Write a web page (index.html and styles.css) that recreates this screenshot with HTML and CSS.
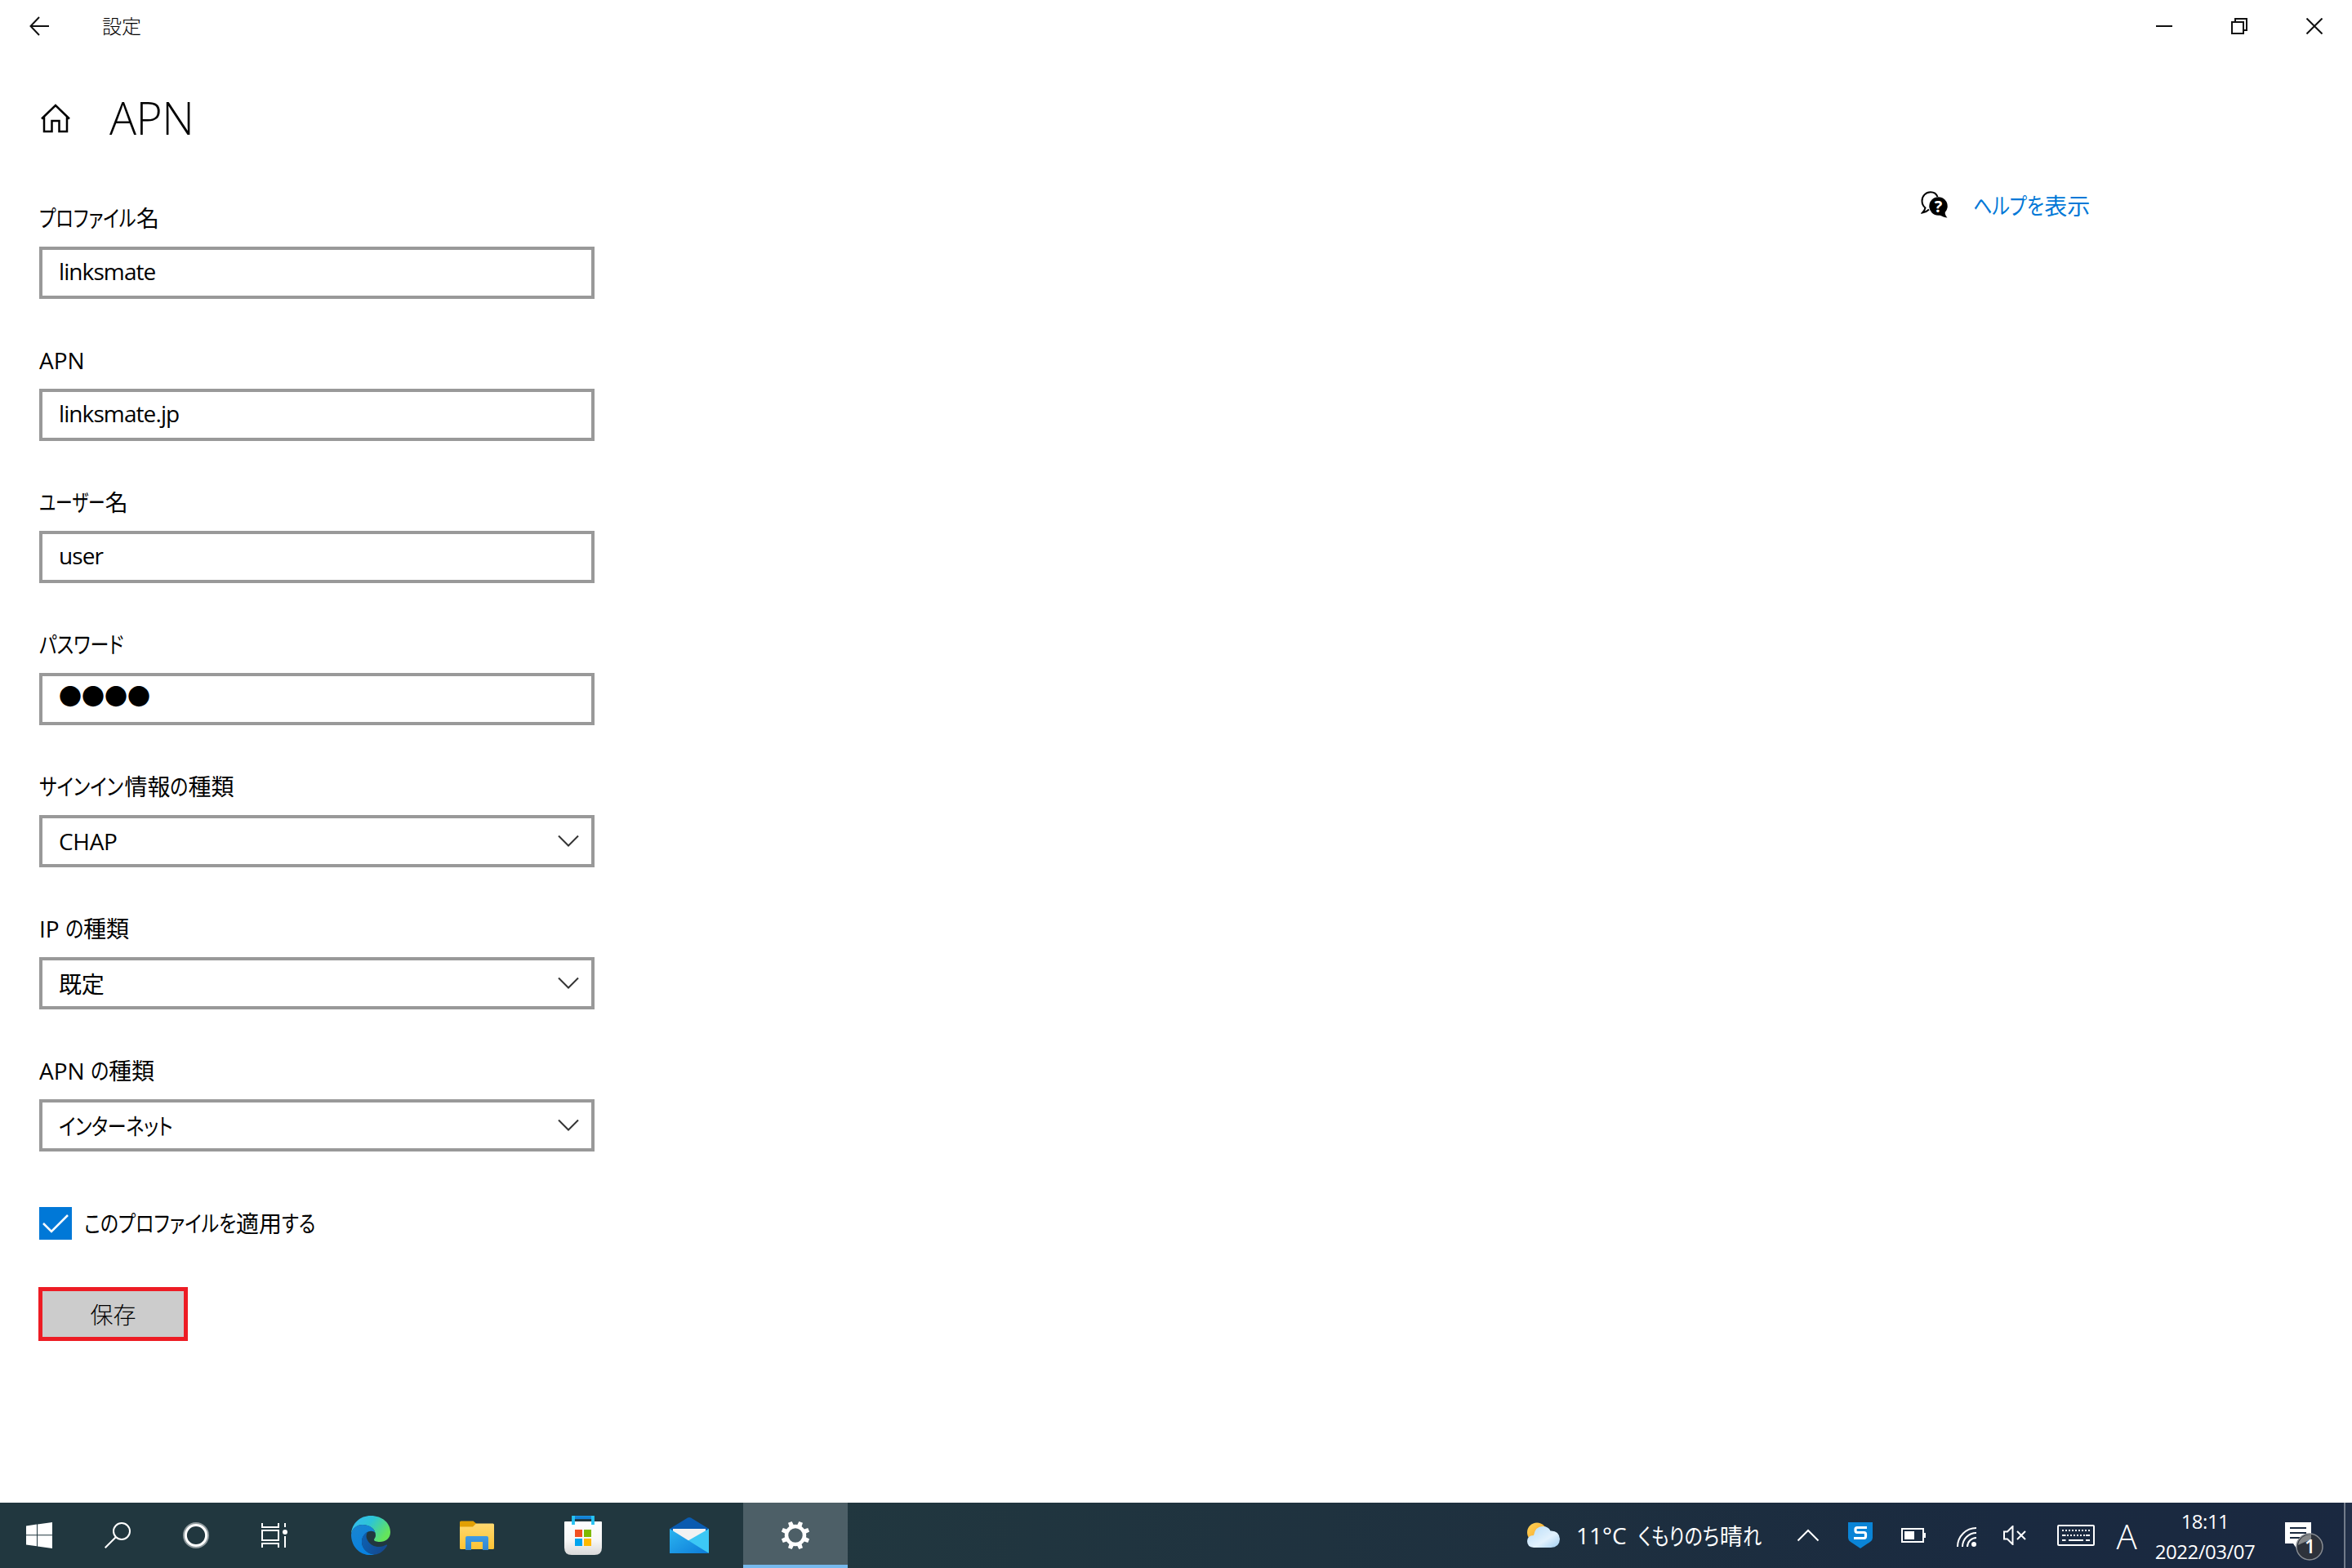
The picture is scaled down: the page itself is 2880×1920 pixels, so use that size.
FILE: index.html
```html
<!DOCTYPE html>
<html lang="ja">
<head>
  <meta charset="UTF-8">
  <meta name="viewport" content="width=device-width, initial-scale=1.0">
  <title>設定</title>
  <link rel="stylesheet" href="styles.css">
</head>
<body>

<!-- Title bar -->
<header class="titlebar">
  <svg class="back" width="24" height="24" viewBox="0 0 24 24"><path d="M24 12H1.5M12 1L1.5 12L12 23"/></svg>
  <span class="app-name">設定</span>
  <div class="window-buttons">
    <svg width="20" height="20" viewBox="0 0 20 20"><path d="M0 10H20"/></svg>
    <svg width="20" height="20" viewBox="0 0 20 20"><path d="M1 5H15V19H1zM5 5V1H19V15H15"/></svg>
    <svg width="20" height="20" viewBox="0 0 20 20"><path d="M.5 .5L19.5 19.5M19.5 .5L.5 19.5"/></svg>
  </div>
</header>

<main class="page">
  <section class="settings">
    <div class="heading">
      <svg width="40" height="40" viewBox="0 0 40 40"><path d="M3 20.5L20 4L37 20.5M6 18V36H15.500V23H24.500V36H34V18"/></svg>
      <h1>APN</h1>
    </div>

    <form class="form">
      <div class="field">
        <label><span class="kana k-profile">プロファイル</span>名</label>
        <div class="input">linksmate</div>
      </div>
      <div class="field">
        <label>APN</label>
        <div class="input">linksmate.jp</div>
      </div>
      <div class="field">
        <label><span class="kana k-user">ユーザー</span>名</label>
        <div class="input">user</div>
      </div>
      <div class="field">
        <label><span class="kana">パスワード</span></label>
        <div class="input password">●●●●</div>
      </div>
      <div class="field">
        <label><span class="kana k-signin">サインイン</span>情報<span class="kana k-no">の</span>種類</label>
        <div class="input select">CHAP
          <svg width="26" height="16" viewBox="0 0 26 16"><path d="M1 1.500L13 13.500L25 1.500"/></svg>
        </div>
      </div>
      <div class="field">
        <label>IP <span class="kana k-no">の</span>種類</label>
        <div class="input select">既定
          <svg width="26" height="16" viewBox="0 0 26 16"><path d="M1 1.500L13 13.500L25 1.500"/></svg>
        </div>
      </div>
      <div class="field">
        <label>APN <span class="kana k-no">の</span>種類</label>
        <div class="input select"><span class="kana">インターネット</span>
          <svg width="26" height="16" viewBox="0 0 26 16"><path d="M1 1.500L13 13.500L25 1.500"/></svg>
        </div>
      </div>

      <div class="check">
        <svg width="40" height="40" viewBox="0 0 40 40"><path d="M5 20L15 30L35 10"/></svg>
        <div class="check-text"><span class="kana k-this">このプロファイルを</span>適用<span class="kana">する</span></div>
      </div>

      <button type="button" class="save">保存</button>
    </form>
  </section>

  <!-- Help link -->
  <aside class="help">
    <svg width="34" height="34" viewBox="0 0 34 34">
      <path class="bubble" d="M20.500 7C19 3 15.500 1.200 12 1.200C6 1.200 1.500 6 1.500 12C1.500 15.500 3 18.500 5.500 20.500C5 23 3.500 25 2 26.500C5.500 26 8 24.500 10 22.500"/>
      <circle cx="21.500" cy="18.500" r="11.200"/>
      <path d="M22 29C26 31 29.500 32.300 32.500 32.500C30.500 30.500 29.800 28.500 29.500 26z"/>
      <text x="21.500" y="26" text-anchor="middle">?</text>
    </svg>
    <a><span class="kana k-help">ヘルプを</span>表示</a>
  </aside>
</main>

<!-- Taskbar -->
<footer class="taskbar">
  <div class="cell system">
    <svg width="32" height="32" viewBox="0 0 32 32"><path fill="#fff" d="M0 4.500L13 2.600V15.200H0zM14 2.400L32 0V15.200H14zM0 16.200H13V29.300L0 27.500zM14 16.200H32V32L14 29.500z"/></svg>
  </div>
  <div class="cell system">
    <svg class="line" width="32" height="32" viewBox="0 0 32 32"><circle cx="21" cy="11" r="10"/><path d="M13.800 18.200L.7 31.300"/></svg>
  </div>
  <div class="cell system">
    <svg width="32" height="32" viewBox="0 0 32 32" fill="none" stroke="#fff"><circle cx="16" cy="16" r="14.800" stroke-width="2.400" opacity=".5"/><circle cx="16" cy="16" r="12.600" stroke-width="3"/></svg>
  </div>
  <div class="cell system">
    <svg class="line" width="32" height="32" viewBox="0 0 32 32"><path d="M1 1V6H21V1M1 10H21V22H1zM1 31V26H21V31M29 1V6M29 17V31"/><circle cx="29" cy="12" r="3" fill="#fff" stroke="none"/></svg>
  </div>

  <div class="apps">
    <div class="cell app">
      <svg width="48" height="48" viewBox="0 0 48 48">
        <defs>
          <linearGradient id="edge-top" x1="0" y1="0" x2="1" y2=".5">
            <stop offset="0" stop-color="#35b8f5"/><stop offset=".5" stop-color="#2dc5d5"/><stop offset="1" stop-color="#64e45b"/>
          </linearGradient>
          <linearGradient id="edge-left" x1="0" y1="0" x2=".4" y2="1">
            <stop offset="0" stop-color="#1a85d0"/><stop offset="1" stop-color="#0882e0"/>
          </linearGradient>
          <linearGradient id="edge-low" x1="0" y1="0" x2="1" y2=".4">
            <stop offset="0" stop-color="#0b62b5"/><stop offset="1" stop-color="#154a90"/>
          </linearGradient>
        </defs>
        <path fill="url(#edge-top)" d="M0 22C1 9 11 0 24 0C38 0 48 9 48 20C48 28 42 32 35 32C31 32 28 31 28 29.500C28 28 30 27 30 24C30 16 22 11 14 11C7 11 2 15 0 22z"/>
        <path fill="url(#edge-left)" d="M0 23C1 15 7 11 14 11C22 11 28 15 29.500 21C28 19 25.500 18.500 23 19C17 20 13 26 13 32C13 40 20 47 29 47.500C14 51 0 40 0 23z"/>
        <path fill="url(#edge-low)" d="M20 20C18 23 18 27 20 30C23 35.500 28 38 34 38C38 38 41 36.500 43 35.500C44 35.200 44.400 36 43.800 37C40 43.500 34.500 47 29 47.500C20 47.500 13 40 13 32C13 26 16 22 20 20z"/>
      </svg>
    </div>
    <div class="cell app">
      <svg width="42" height="36" viewBox="0 0 42 36">
        <defs>
          <linearGradient id="folder" x1="0" y1="0" x2="0" y2="1">
            <stop offset="0" stop-color="#ffd970"/><stop offset="1" stop-color="#fdc334"/>
          </linearGradient>
          <linearGradient id="folder-blue" x1="0" y1="0" x2="0" y2="1">
            <stop offset="0" stop-color="#3f9be6"/><stop offset="1" stop-color="#3386cd"/>
          </linearGradient>
        </defs>
        <path fill="#e2a003" d="M1.500 .5H16.500L20 3.500V10H0V2Q0 .5 1.500 .5z"/>
        <path fill="url(#folder)" d="M0 7.500H16L20 3.500H40.500Q42 3.500 42 5V33.500Q42 35 40.500 35H1.500Q0 35 0 33.500z"/>
        <path fill="url(#folder-blue)" d="M7 36V21Q7 19 9 19H33Q35 19 35 21V36H28V26H14V36z"/>
      </svg>
    </div>
    <div class="cell app">
      <svg width="46" height="48" viewBox="0 0 46 48">
        <defs>
          <linearGradient id="bag" x1="0" y1="0" x2="0" y2="1">
            <stop offset="0" stop-color="#fff"/><stop offset=".55" stop-color="#f7f7f7"/><stop offset="1" stop-color="#d9d9d9"/>
          </linearGradient>
        </defs>
        <path fill="url(#bag)" d="M1 7H45Q46 7 46 8V39Q46 48 37 48H9Q0 48 0 39V8Q0 7 1 7z"/>
        <path fill="none" stroke="#27c3f2" stroke-width="3.800" d="M11 11V2H35V11"/>
        <path stroke="#1482d8" stroke-width="3.800" d="M13 2.200H33"/>
        <path fill="#f25022" d="M13 17H22V26H13z"/><path fill="#7fba00" d="M24 17H33V26H24z"/>
        <path fill="#00a4ef" d="M13 28H22V37H13z"/><path fill="#ffb900" d="M24 28H33V37H24z"/>
      </svg>
    </div>
    <div class="cell app">
      <svg width="48" height="46" viewBox="0 0 48 46">
        <defs>
          <linearGradient id="mail" x1="0" y1="0" x2="1" y2="1">
            <stop offset="0" stop-color="#2bb5f0"/><stop offset="1" stop-color="#0d7bd8"/>
          </linearGradient>
        </defs>
        <path fill="#0a5bb0" d="M0 15L22 1.500Q24 .3 26 1.500L48 15V20H0z"/>
        <path fill="#f2f2f2" d="M4 15H44V22L24 32L4 22z"/>
        <path fill="#3cc8f5" d="M48 15V45L20 31z"/>
        <path fill="url(#mail)" d="M0 15L48 45V45H0z"/>
      </svg>
    </div>
    <div class="cell app active">
      <svg width="36" height="36" viewBox="-18 -18 36 36">
        <g fill="#fff">
          <g id="teeth"><path d="M-3 -10L-2.500 -17.500H2.500L3 -10zM-3 10L-2.500 17.500H2.500L3 10z" transform="rotate(22.500)"/></g>
          <use href="#teeth" transform="rotate(45)"/>
          <use href="#teeth" transform="rotate(90)"/>
          <use href="#teeth" transform="rotate(135)"/>
        </g>
        <circle r="11" fill="#4d5f67" stroke="#fff" stroke-width="4.500"/>
      </svg>
    </div>
  </div>

  <div class="tray">
    <div class="weather">
      <svg width="40" height="32" viewBox="0 0 40 32">
        <defs>
          <linearGradient id="sun" x1="0" y1="0" x2="1" y2="1">
            <stop offset="0" stop-color="#ffd65a"/><stop offset="1" stop-color="#f79a1c"/>
          </linearGradient>
          <linearGradient id="cloud" x1="0" y1="0" x2="1" y2="1">
            <stop offset="0" stop-color="#b5dcf8"/><stop offset=".6" stop-color="#e2f1fd"/><stop offset="1" stop-color="#9fcdf0"/>
          </linearGradient>
        </defs>
        <circle cx="12" cy="12.500" r="12" fill="url(#sun)"/>
        <path fill="url(#cloud)" d="M8 31Q0 30.500 0 23Q.5 16 8 16Q10 5 19 5Q26 5 28.500 10.500Q39 10 40 20.500Q39.500 31 29 31z"/>
      </svg>
      <span class="temp">11°C</span>
      <div class="sky"><span class="kana k-cloudy">くもりのち</span>晴<span class="kana">れ</span></div>
    </div>
    <div class="cell icon-chevron">
      <svg class="line" width="28" height="16" viewBox="0 0 28 16"><path d="M1.500 14.500L14 2L26.500 14.500"/></svg>
    </div>
    <div class="cell icon-shield">
      <svg width="30" height="32" viewBox="0 0 30 32"><path fill="#0a84d6" d="M0 0H30V19Q30 22 27 24L15 32L3 24Q0 22 0 19z"/><path fill="none" stroke="#fff" stroke-width="3.200" d="M23 6.500H11Q9 6.500 9 8.500V10Q9 12.500 11 12.500H19.500Q21.500 12.500 21.500 14.500V17Q21.500 19.500 19.500 19.500H7"/></svg>
    </div>
    <div class="cell icon-battery">
      <svg class="line" width="30" height="18" viewBox="0 0 30 18"><path d="M1 1H27V17H1z"/><path fill="#fff" stroke="none" d="M4 4H16V14H4zM28 6H30V12H28z"/></svg>
    </div>
    <div class="cell icon-wifi">
      <svg class="line" width="24" height="24" viewBox="0 0 24 24"><path d="M1 24A23 23 0 0 1 24 1M7 24A17 17 0 0 1 24 7M13 24A11 11 0 0 1 24 13"/><circle cx="21" cy="21" r="3" fill="#fff" stroke="none"/></svg>
    </div>
    <div class="cell icon-speaker">
      <svg class="line" width="28" height="24" viewBox="0 0 28 24"><path d="M1 7.500H5L11.500 1V23L5 16.500H1zM17 7L27 17M27 7L17 17"/></svg>
    </div>
    <div class="cell icon-keyboard">
      <svg class="line" width="46" height="26" viewBox="0 0 46 26"><rect x="1" y="1" width="44" height="24" rx="1"/><path stroke-dasharray="2 2" d="M6 7H40M12 13H34"/><path d="M6 13H10.500M35 13H40M6 19H10.500M14 19H32M35 19H40"/></svg>
    </div>
    <div class="cell ime">A</div>
    <div class="clock">
      <span>18:11</span>
      <span>2022/03/07</span>
    </div>
    <div class="notice">
      <svg width="50" height="50" viewBox="0 0 50 50">
        <path fill="#fff" d="M0 2H32V28H20L14 34L10 28H0z"/>
        <path stroke="#1b2a40" stroke-width="2" d="M6 9H26M6 15H26M6 21H26"/>
        <circle cx="30" cy="32" r="16" fill="#2d323b" stroke="#888c92" stroke-width="1.500"/>
        <path fill="#858789" d="M16 30A15.200 15.200 0 0 1 32 17V23L20 28z"/>
        <text x="30.500" y="40" text-anchor="middle">1</text>
      </svg>
    </div>
    <div class="show-desktop"></div>
  </div>
</footer>

</body>
</html>
```

FILE: styles.css
```css
* {
  box-sizing: border-box;
}

body {
  margin: 0;
  height: 1920px;
  display: flex;
  flex-direction: column;
  overflow: hidden;
  background: #fff;
  color: #000;
  font-family: "Open Sans", "Noto Sans CJK JP", sans-serif;
  font-size: 28px;
  font-weight: 400;
  font-feature-settings: "palt";
}

svg {
  display: block;
  flex: none;
}

/* Condensed kana, the negative margins take up the freed width */
.kana {
  display: inline-block;
  transform: scaleX(0.82);
  transform-origin: 0 50%;
}

.k-profile {
  transform: scaleX(0.79);
  margin-right: -31px;
}

.k-user {
  transform: scaleX(0.74);
  margin-right: -28px;
}

.k-signin {
  margin-right: -21px;
}

.k-no {
  margin-right: -5px;
}

.k-this {
  margin-right: -41px;
}

.k-help {
  margin-right: -19px;
}

.k-cloudy {
  margin-right: -21px;
}

/* Title bar */
.titlebar {
  display: flex;
  align-items: center;
  height: 64px;
  padding: 0 36px;
}

.titlebar svg {
  fill: none;
  stroke: #111;
  stroke-width: 2;
}

.app-name {
  margin-left: 65px;
  font-size: 24px;
  font-weight: 300;
  line-height: 64px;
  font-feature-settings: normal;
}

.window-buttons {
  display: flex;
  gap: 72px;
  margin-left: auto;
}

/* Page */
.page {
  flex: 1;
  display: flex;
  justify-content: space-between;
}

.heading {
  display: flex;
  align-items: center;
  height: 80px;
  margin-top: 41px;
  padding-left: 48px;
}

.heading svg {
  fill: none;
  stroke: #000;
  stroke-width: 2.5;
}

h1 {
  margin: 0 0 0 46px;
  padding-bottom: 2px;
  font-size: 55px;
  font-weight: 350;
  line-height: 78px;
  letter-spacing: -0.5px;
}

.form {
  width: 728px;
  padding: 62px 0 0 48px;
}

.field {
  height: 174px;
}

.field label {
  display: block;
  height: 55px;
  line-height: 40px;
  white-space: nowrap;
}

.input {
  display: flex;
  align-items: center;
  justify-content: space-between;
  height: 64px;
  padding: 0 16px 4px 20px;
  border: 4px solid #999;
  letter-spacing: -0.9px;
}

.select {
  padding-right: 15px;
  padding-bottom: 1px;
  letter-spacing: -0.3px;
}

.select svg {
  fill: none;
  stroke: #333;
  stroke-width: 2;
}

.password {
  padding-bottom: 8px;
  font-family: "Noto Sans CJK JP", sans-serif;
  font-feature-settings: normal;
  letter-spacing: 0;
}

.check {
  display: flex;
  align-items: center;
  height: 40px;
  margin-top: 13px;
}

.check svg {
  background: #0078d7;
  fill: none;
  stroke: #fff;
  stroke-width: 2.5;
}

.check-text {
  margin-left: 15px;
  padding-bottom: 3px;
  white-space: nowrap;
}

.save {
  display: block;
  width: 183px;
  height: 66px;
  margin: 58px 0 0 -1px;
  padding: 0;
  border: 5px solid #ed1c24;
  background: #ccc;
  color: #000;
  font: inherit;
  font-weight: 300;
}

/* Help link */
.help {
  display: flex;
  align-items: center;
  height: 40px;
  width: 528px;
  margin-top: 167px;
}

.help .bubble {
  fill: none;
  stroke: #000;
  stroke-width: 2;
}

.help text {
  fill: #fff;
  font-size: 20px;
  font-weight: 700;
}

.help a {
  margin-left: 30px;
  color: #0078d7;
  white-space: nowrap;
}

/* Taskbar */
.taskbar {
  display: flex;
  height: 80px;
  background: linear-gradient(to right, #21373f 0%, #21373f 35%, #1e303f 65%, #1a2a40 85%, #1a2840 100%);
  color: #fff;
}

.cell {
  display: flex;
  align-items: center;
  justify-content: center;
}

.line {
  fill: none;
  stroke: #fff;
  stroke-width: 2;
}

.system {
  width: 96px;
}

.apps {
  display: flex;
  gap: 2px;
  margin-left: 6px;
}

.app {
  width: 128px;
}

.active {
  background: #4d5f67;
  box-shadow: inset 0 -4px #76b9ed;
}

.tray {
  display: flex;
  margin-left: auto;
  white-space: nowrap;
}

.weather {
  display: flex;
  align-items: center;
  width: 312px;
}

.temp {
  width: 76px;
  margin-left: 20px;
}

.icon-chevron,
.icon-shield {
  width: 64px;
}

.icon-battery {
  width: 66px;
}

.icon-wifi {
  width: 64px;
  padding-top: 4px;
}

.icon-speaker {
  width: 54px;
}

.icon-keyboard {
  width: 96px;
}

.ime {
  width: 28px;
  font-size: 42px;
  font-weight: 350;
}

.clock {
  width: 164px;
  padding-top: 4px;
  font-size: 24px;
  line-height: 37px;
  letter-spacing: -0.5px;
  text-align: center;
}

.clock span {
  display: block;
}

.notice {
  width: 88px;
  padding: 22px 0 0 16px;
}

.notice text {
  fill: #fff;
  font-size: 23px;
  font-weight: 600;
}

.show-desktop {
  width: 10px;
  border-left: 2px solid #727b8a;
  background: #223049;
}
```
